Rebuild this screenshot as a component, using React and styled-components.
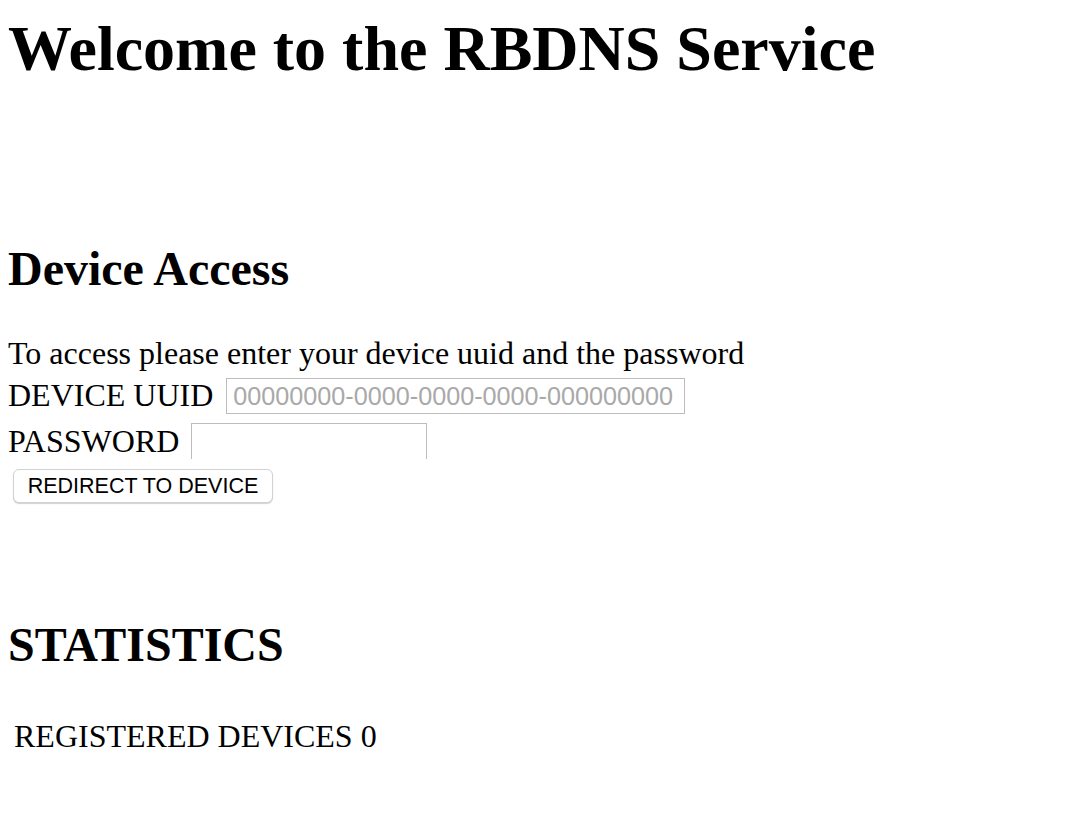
import React from "react";
import styled, { createGlobalStyle } from "styled-components";

const GlobalStyle = createGlobalStyle`
  html, body {
    margin: 0;
    padding: 0;
    background: #ffffff;
  }
  body {
    font-family: "Liberation Serif", "Times New Roman", serif;
    color: #000000;
  }
`;

const Page = styled.div`
  padding: 0 8px;
  display: flex;
  flex-direction: column;
  align-items: flex-start;
`;

const Title = styled.h1`
  font-size: 64px;
  line-height: 74px;
  font-weight: bold;
  margin: 12px 0 0 0;
`;

const SectionTitle = styled.h2`
  font-size: 48px;
  line-height: 55px;
  font-weight: bold;
  margin: ${(p) => p.$top}px 0 0 0;
`;

const Text = styled.p`
  font-size: 32px;
  line-height: 37px;
  margin: ${(p) => p.$top || 0}px 0 0 0;
`;

const Row = styled.div`
  display: flex;
  align-items: center;
  height: ${(p) => p.$height}px;
  margin-top: ${(p) => p.$top}px;
  gap: ${(p) => p.$gap}px;
`;

const Label = styled.label`
  font-size: 32px;
  line-height: 37px;
  white-space: nowrap;
`;

const Input = styled.input`
  box-sizing: border-box;
  width: ${(p) => p.$width}px;
  height: 36px;
  margin: 0;
  padding: 2px 6px 0 6px;
  border: 1px solid #bdbdbd;
  border-bottom: ${(p) => (p.$open ? "none" : "1px solid #bdbdbd")};
  border-radius: 0;
  background: #ffffff;
  font-family: "Liberation Sans", Helvetica, Arial, sans-serif;
  font-size: 25.2px;
  color: #000000;
  outline: none;
  &::placeholder {
    color: #a9a9a9;
  }
`;

const Button = styled.button`
  box-sizing: border-box;
  width: 260px;
  height: 34px;
  margin: 10px 0 0 5px;
  padding: 0;
  background: #ffffff;
  border: 1px solid #d2d2d2;
  border-radius: 6px;
  box-shadow: 0 1px 1px rgba(0, 0, 0, 0.18);
  font-family: "Liberation Sans", Helvetica, Arial, sans-serif;
  font-size: 21.5px;
  color: #000000;
  cursor: pointer;
`;

const StatsTable = styled.table`
  border-spacing: 4px;
  margin-top: 40px;
  margin-left: -4px;
`;

const StatCell = styled.td`
  padding: 2px;
  font-size: 32px;
  line-height: 37px;
  padding-left: 6px;
`;

export default function App() {
  return (
    <Page>
      <GlobalStyle />
      <Title>Welcome to the RBDNS Service</Title>

      <SectionTitle $top={155}>Device Access</SectionTitle>
      <Text $top={39}>To access please enter your device uuid and the password</Text>
      <Row $height={37} $top={5} $gap={13}>
        <Label>DEVICE UUID</Label>
        <Input $width={459} placeholder="00000000-0000-0000-0000-000000000" />
      </Row>
      <Row $height={36} $top={9} $gap={12}>
        <Label>PASSWORD</Label>
        <Input $width={236} $open type="password" />
      </Row>
      <Button>REDIRECT TO DEVICE</Button>

      <SectionTitle $top={114}>STATISTICS</SectionTitle>
      <StatsTable>
        <tbody>
          <tr>
            <StatCell>REGISTERED DEVICES 0</StatCell>
          </tr>
        </tbody>
      </StatsTable>
    </Page>
  );
}
